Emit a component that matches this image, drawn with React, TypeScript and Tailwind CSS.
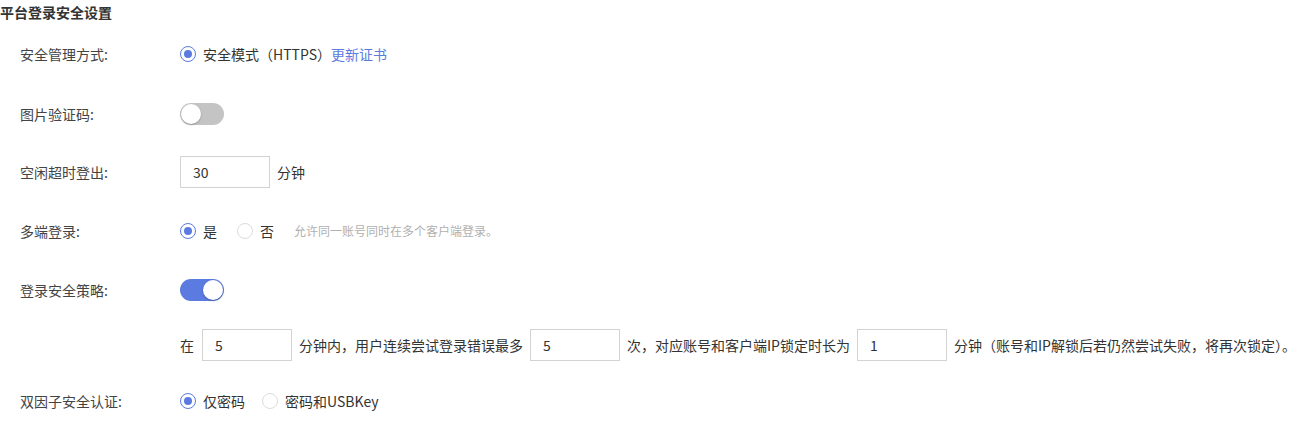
import { useState } from "react";

const font = { fontFamily: '"Noto Sans CJK SC", "Noto Sans", sans-serif' };

function Radio({ checked, label, onClick }: { checked: boolean; label: string; onClick?: () => void }) {
    return (
        <label className="flex items-center cursor-pointer" onClick={onClick}>
            <span
                className={
                    "flex items-center justify-center w-4 h-4 rounded-full border bg-white " +
                    (checked ? "border-[#5b7be0]" : "border-[#dcdcdc]")
                }
            >
                {checked && <span className="w-2 h-2 rounded-full bg-[#5b7be0]" />}
            </span>
            <span className="ml-[7px] text-[#333]">{label}</span>
        </label>
    );
}

function Toggle({ on, onClick }: { on: boolean; onClick: () => void }) {
    return (
        <button
            onClick={onClick}
            className={
                "relative w-[44px] h-[22px] rounded-full transition-colors " +
                (on ? "bg-[#5b7be0]" : "bg-[#c4c4c4]")
            }
        >
            <span
                className={
                    "absolute top-[1px] w-[20px] h-[20px] rounded-full bg-white shadow-[0_1px_2px_rgba(0,0,0,0.25)] transition-all " +
                    (on ? "left-[23px]" : "left-[1px]")
                }
            />
        </button>
    );
}

function NumInput({ value }: { value: string }) {
    return (
        <input
            defaultValue={value}
            className="w-[90px] h-8 border border-[#d3d3d3] bg-white px-[12px] text-[14px] text-[#333] outline-none focus:border-[#5b7be0]"
            style={font}
        />
    );
}

function Row({ label, className, children }: { label?: string; className?: string; children: React.ReactNode }) {
    return (
        <div className={"flex items-center h-8 " + (className || "")}>
            <div className="w-[180px] pl-5 text-[#444]">{label}</div>
            <div className="flex items-center">{children}</div>
        </div>
    );
}

export default function App() {
    const [captcha, setCaptcha] = useState(false);
    const [policy, setPolicy] = useState(true);
    const [multi, setMulti] = useState(true);
    const [twoFactor, setTwoFactor] = useState(false);

    return (
        <div className="bg-white w-[1302px] h-[421px] text-[14px] text-[#333]" style={font}>
            <div className="h-6 leading-6 font-bold text-[#333]">平台登录安全设置</div>

            <Row label="安全管理方式:" className="mt-[14px]">
                <Radio checked label="安全模式（HTTPS）" />
                <a className="text-[#5b7be0] cursor-pointer">更新证书</a>
            </Row>

            <Row label="图片验证码:" className="mt-[28px]">
                <Toggle on={captcha} onClick={() => setCaptcha(!captcha)} />
            </Row>

            <Row label="空闲超时登出:" className="mt-[26px]">
                <NumInput value="30" />
                <span className="ml-[7px]">分钟</span>
            </Row>

            <Row label="多端登录:" className="mt-[27px]">
                <Radio checked={multi} label="是" onClick={() => setMulti(true)} />
                <div className="ml-[20px]">
                    <Radio checked={!multi} label="否" onClick={() => setMulti(false)} />
                </div>
                <span className="ml-[20px] text-[12px] text-[#b0b0b0]">允许同一账号同时在多个客户端登录。</span>
            </Row>

            <Row label="登录安全策略:" className="mt-[27px]">
                <Toggle on={policy} onClick={() => setPolicy(!policy)} />
            </Row>

            {policy && (
                <Row className="mt-[23px]">
                    <span className="mr-[8px]">在</span>
                    <NumInput value="5" />
                    <span className="mx-[7px]">分钟内，用户连续尝试登录错误最多</span>
                    <NumInput value="5" />
                    <span className="mx-[7px]">次，对应账号和客户端IP锁定时长为</span>
                    <NumInput value="1" />
                    <span className="ml-[7px]">分钟（账号和IP解锁后若仍然尝试失败，将再次锁定）。</span>
                </Row>
            )}

            <Row label="双因子安全认证:" className="mt-[24px]">
                <Radio checked={!twoFactor} label="仅密码" onClick={() => setTwoFactor(false)} />
                <div className="ml-[17px]">
                    <Radio checked={twoFactor} label="密码和USBKey" onClick={() => setTwoFactor(true)} />
                </div>
            </Row>
        </div>
    );
}
